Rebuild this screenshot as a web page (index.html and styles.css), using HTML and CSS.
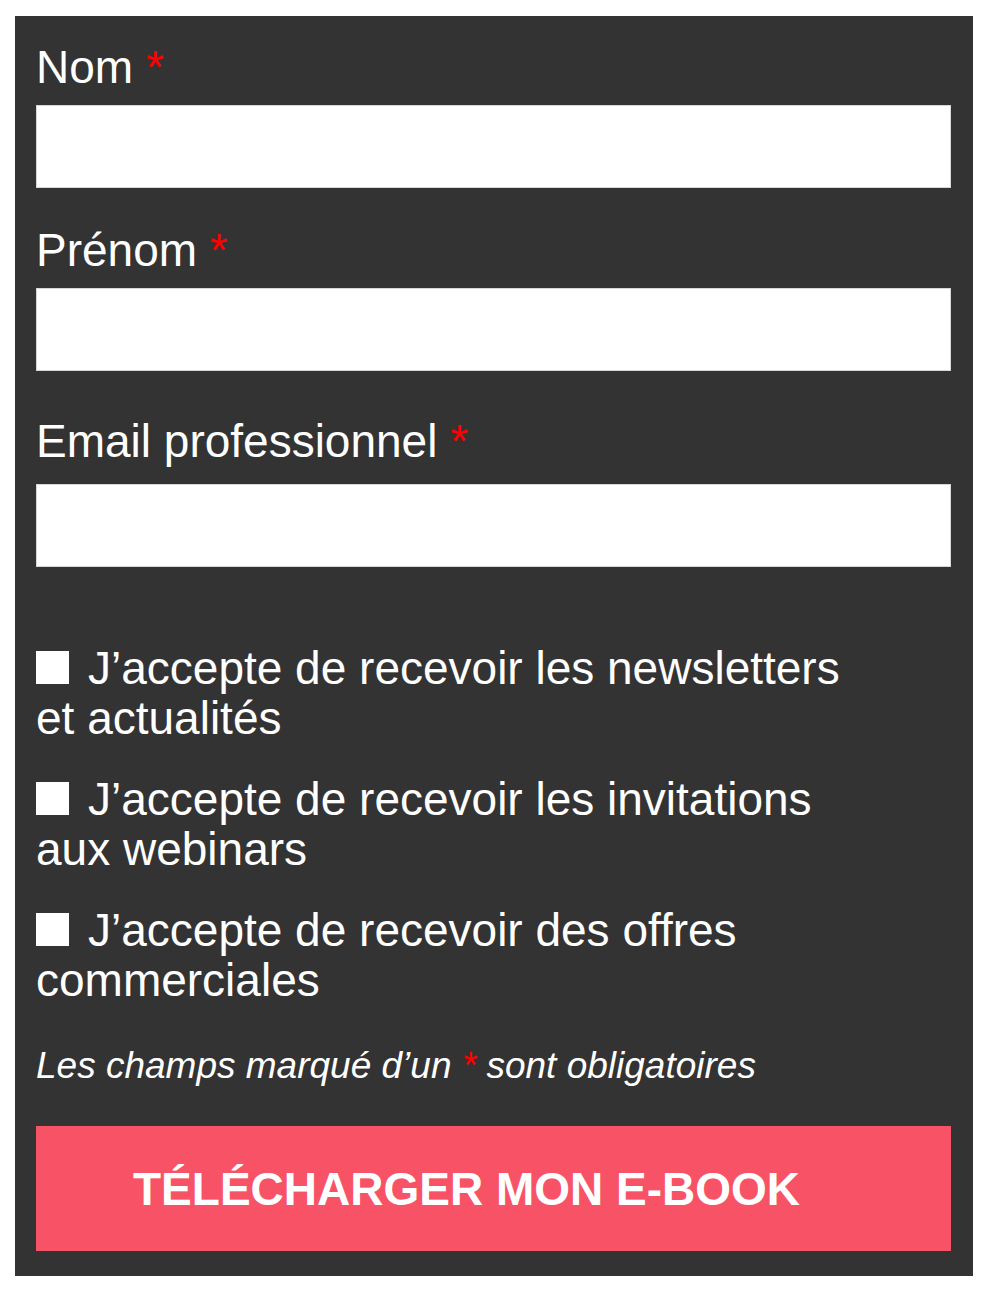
FILE: index.html
```html
<!DOCTYPE html>
<html lang="fr">
<head>
  <meta charset="UTF-8">
  <meta name="viewport" content="width=device-width, initial-scale=1.0">
  <title>Télécharger l'e-book</title>
  <link rel="stylesheet" href="styles.css">
</head>
<body>
  <form class="ebook-form" id="ebookForm">
    <div class="form-group">
      <label for="nom">Nom <span class="required">*</span></label>
      <input type="text" id="nom" name="nom" required>
    </div>
    <div class="form-group">
      <label for="prenom">Prénom <span class="required">*</span></label>
      <input type="text" id="prenom" name="prenom" required>
    </div>
    <div class="form-group form-group-email">
      <label for="email">Email professionnel <span class="required">*</span></label>
      <input type="email" id="email" name="email" required>
    </div>

    <div class="optins">
      <label class="optin"><input type="checkbox" name="newsletter">J’accepte de recevoir les newsletters et actualités</label>
      <label class="optin"><input type="checkbox" name="webinars">J’accepte de recevoir les invitations aux webinars</label>
      <label class="optin"><input type="checkbox" name="offres">J’accepte de recevoir des offres commerciales</label>
    </div>

    <p class="form-note">Les champs marqué d’un <span class="required">*</span> sont obligatoires</p>

    <button type="submit">TÉLÉCHARGER MON E-BOOK</button>
  </form>
</body>
</html>
```

FILE: styles.css
```css
body {
  font-family: 'Liberation Sans', Arial, sans-serif;
  background-color: #fff;
  margin: 0;
  padding: 0;
}
.ebook-form {
  background-color: #333;
  width: 958px;
  box-sizing: border-box;
  margin: 16px 0 0 15px;
  padding: 25px 22px 25px 21px;
  color: #fff;
}
.form-group {
  margin-bottom: 36px;
}
.form-group label {
  display: block;
  font-size: 46px;
  line-height: 52px;
  margin-bottom: 12px;
}
.form-group-email {
  margin-top: 44px;
}
.form-group-email label {
  margin-bottom: 17px;
}
.required {
  color: #f00;
}
.form-group input {
  display: block;
  width: 100%;
  height: 83px;
  box-sizing: border-box;
  border: 1px solid #d6d6d6;
  background-color: #fff;
  font-size: 24px;
  padding: 0 16px;
  margin: 0;
}
.optins {
  display: flex;
  flex-direction: column;
  gap: 31px;
  padding-top: 40px;
}
.optin {
  display: block;
  width: 830px;
  font-size: 46px;
  line-height: 50px;
  cursor: pointer;
}
.optin input {
  appearance: none;
  -webkit-appearance: none;
  display: inline-block;
  width: 33px;
  height: 33px;
  margin: 0 19px 0 0;
  background-color: #fff;
  border: none;
  border-radius: 0;
  vertical-align: baseline;
}
.form-note {
  font-size: 37px;
  font-style: italic;
  line-height: 44px;
  margin: 39px 0 38px;
}
button {
  display: flex;
  align-items: center;
  width: 100%;
  height: 125px;
  padding: 0 0 0 97px;
  background-color: #f75266;
  color: #fff;
  border: none;
  font-family: 'Liberation Sans', Arial, sans-serif;
  font-size: 46px;
  font-weight: bold;
  cursor: pointer;
}
```
